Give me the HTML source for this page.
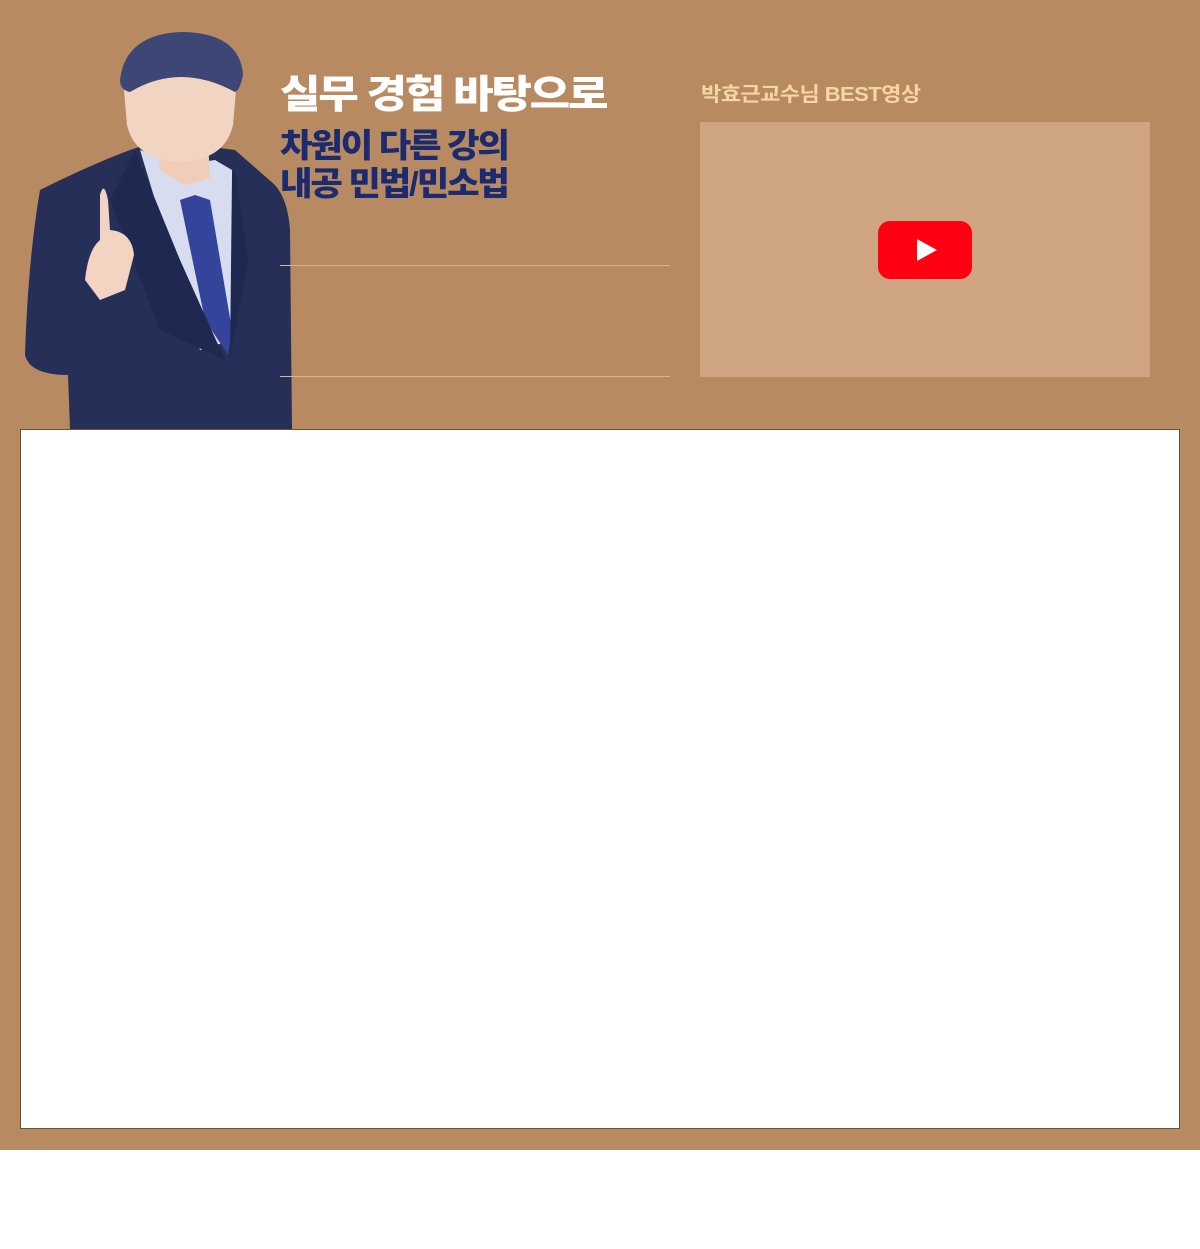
<!DOCTYPE html>
<html><head><meta charset="utf-8"><style>
body{margin:0;width:1200px;height:1249px;background:#fff;position:relative;overflow:hidden;font-family:"Liberation Sans","Noto Sans CJK KR",sans-serif}
.top{position:absolute;left:0;top:0;width:1200px;height:1150px;background:#b88a62}
.box{position:absolute;left:20px;top:429px;width:1158px;height:698px;background:#fff;border:1px solid #6e5232}
.t1{position:absolute;left:280px;top:72px;color:#fff;font-size:39px;font-weight:900;letter-spacing:-2px;line-height:48px;transform:scaleX(1.13);transform-origin:left}
.t2{position:absolute;left:280px;top:127px;color:#1c2a6e;font-size:33px;font-weight:900;letter-spacing:-2px;line-height:38px;transform:scaleX(1.07);transform-origin:left}
.line{position:absolute;left:280px;width:390px;height:1px;background:#d9b68a}
.lab{position:absolute;left:701px;top:78px;color:#f7d6a6;font-size:20px;font-weight:bold;letter-spacing:-0.5px;transform:scaleX(1.1);transform-origin:left}
.vid{position:absolute;left:700px;top:122px;width:450px;height:255px;background:#cfa581}
.yt{position:absolute;left:878px;top:221px;width:94px;height:58px;background:#fe0011;border-radius:12px}
</style></head><body>
<div class="top"></div>
<svg style="position:absolute;left:0;top:0" width="300" height="430">
<path d="M40 190 Q90 165 130 150 L160 140 L235 150 L275 185 Q288 200 290 230 L292 430 L70 430 L68 375 Q30 375 25 355 Q28 260 40 190Z" fill="#252f58"/>
<path d="M140 150 L180 165 L215 160 L232 170 L232 340 L200 350 L170 250Z" fill="#d7dcef"/>
<path d="M180 200 L195 195 L210 200 L232 330 L228 355 L205 320Z" fill="#34449a"/>
<path d="M135 150 L180 260 L225 360 L160 330 L110 200Z" fill="#1f2850"/>
<path d="M235 170 L248 260 L230 360 L232 175Z" fill="#1f2850"/>
<path d="M158 140 L208 140 L210 178 L185 185 L160 170Z" fill="#efcdb9"/>
<path d="M124 90 Q124 60 180 58 Q236 60 236 90 L233 125 Q225 160 180 162 Q135 160 127 125Z" fill="#f2d4c2"/>
<path d="M120 80 Q125 35 180 32 Q240 32 243 75 Q240 90 235 92 Q180 62 130 92 Q120 90 120 80Z" fill="#3d4674"/>
<path d="M100 195 Q104 180 108 200 L110 230 Q132 232 134 255 L125 290 L100 300 L85 280 Q88 250 100 240Z" fill="#f3d4c2"/>
</svg>
<div class="t1">실무 경험 바탕으로</div>
<div class="t2">차원이 다른 강의<br>내공 민법/민소법</div>
<div class="line" style="top:265px"></div>
<div class="line" style="top:376px"></div>
<div class="lab">박효근교수님 BEST영상</div>
<div class="vid"></div>
<div class="yt"><svg width="94" height="58"><path d="M39 18 L59 29 L39 40Z" fill="#fff"/></svg></div>
<div class="box"></div>
</body></html>
